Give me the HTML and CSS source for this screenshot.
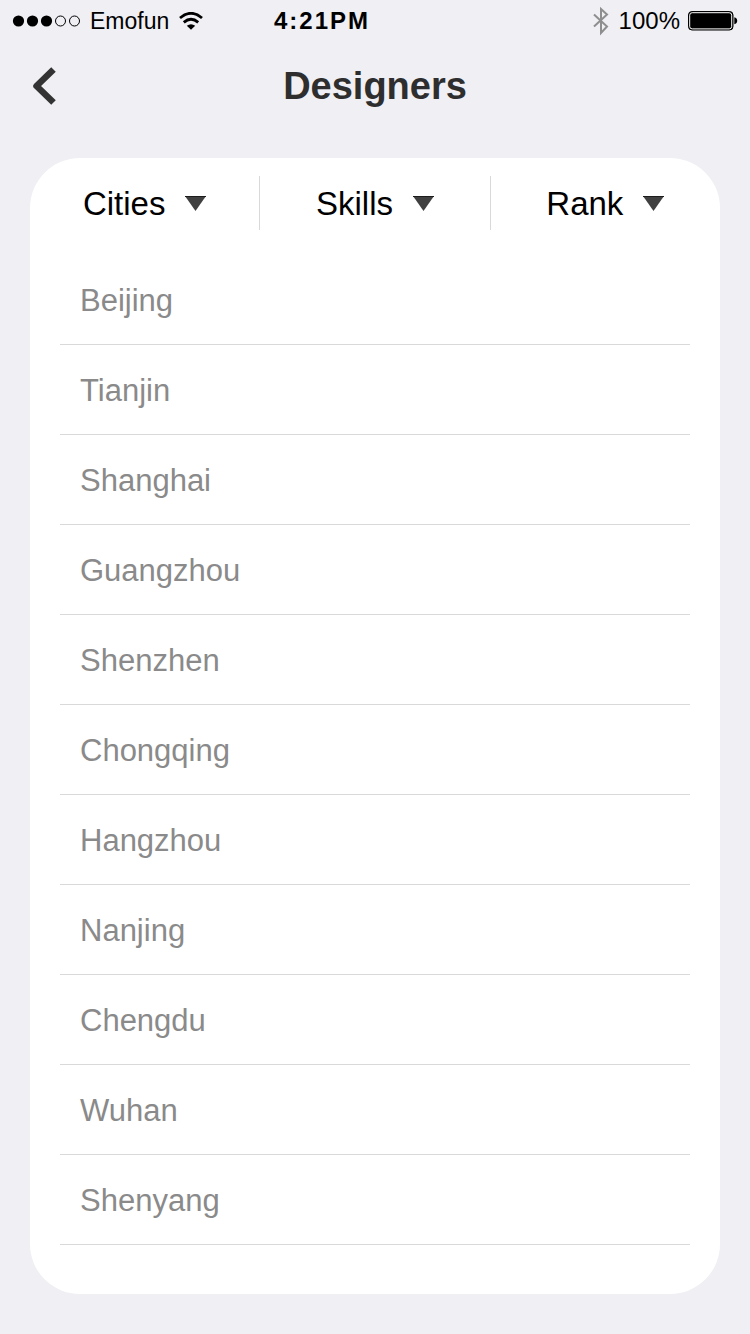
FILE: index.html
```html
<!DOCTYPE html>
<html lang="en">
<head>
    <meta charset="UTF-8">
    <meta name="viewport" content="width=device-width, initial-scale=1">
    <title>Designers</title>
    <link rel="stylesheet" href="styles.css">
</head>
<body>
    <!-- status bar -->
    <div class="status">
        <div class="status-left">
            <svg class="signal" width="68" height="12" viewBox="0 0 68 12" aria-hidden="true">
                <circle cx="6.5" cy="6" r="5.6"/>
                <circle cx="20.5" cy="6" r="5.6"/>
                <circle cx="34.5" cy="6" r="5.6"/>
                <circle class="empty" cx="48.5" cy="6" r="5"/>
                <circle class="empty" cx="62.5" cy="6" r="5"/>
            </svg>
            <span class="carrier">Emofun</span>
            <svg class="wifi" width="24" height="18" viewBox="0 0 24 18" aria-hidden="true">
                <path d="M1 6 Q12 -3.4 23 6"/>
                <path d="M4.8 10.4 Q12 4.2 19.2 10.4"/>
                <path class="dot" d="M7.8 13.8 Q12 10.6 16.2 13.8 L12 17.8 Z"/>
            </svg>
        </div>
        <span class="time">4:21PM</span>
        <div class="status-right">
            <svg class="bluetooth" width="16" height="30" viewBox="0 0 16 30" aria-hidden="true">
                <path d="M1 8.5 L14 20.5 L8 27 V3 L14 8.5 L1 20.5"/>
            </svg>
            <span class="percent">100%</span>
            <svg class="battery" width="50" height="20" viewBox="0 0 50 20" aria-hidden="true">
                <rect class="case" x="0.5" y="0.5" width="44.5" height="18.5" rx="3.5"/>
                <rect class="charge" x="1.7" y="1.7" width="42" height="16.2" rx="2.5"/>
                <path d="M46.3 6.2 Q49.2 7 49.2 9.7 Q49.2 12.4 46.3 13.2 Z"/>
            </svg>
        </div>
    </div>

    <!-- title bar -->
    <header class="header">
        <a class="back" href="#" aria-label="Back">
            <svg width="26" height="40" viewBox="0 0 26 40" aria-hidden="true">
                <path d="M21.5 3.5 L4.5 20 L21.5 36.5"/>
            </svg>
        </a>
        <h1>Designers</h1>
    </header>

    <main class="card">
        <!-- filters, Cities is open -->
        <div class="filters">
            <button type="button" aria-expanded="true" aria-controls="cities">
                <span>Cities</span>
                <svg width="21" height="15" viewBox="0 0 21 15" aria-hidden="true"><path d="M0 0 H21 L10.5 15 Z"/><path class="edge" d="M0 0.5 H21"/></svg>
            </button>
            <button type="button" aria-expanded="false">
                <span>Skills</span>
                <svg width="21" height="15" viewBox="0 0 21 15" aria-hidden="true"><path d="M0 0 H21 L10.5 15 Z"/><path class="edge" d="M0 0.5 H21"/></svg>
            </button>
            <button type="button" aria-expanded="false">
                <span>Rank</span>
                <svg width="21" height="15" viewBox="0 0 21 15" aria-hidden="true"><path d="M0 0 H21 L10.5 15 Z"/><path class="edge" d="M0 0.5 H21"/></svg>
            </button>
        </div>

        <ul class="cities" id="cities">
            <li><a href="#">Beijing</a></li>
            <li><a href="#">Tianjin</a></li>
            <li><a href="#">Shanghai</a></li>
            <li><a href="#">Guangzhou</a></li>
            <li><a href="#">Shenzhen</a></li>
            <li><a href="#">Chongqing</a></li>
            <li><a href="#">Hangzhou</a></li>
            <li><a href="#">Nanjing</a></li>
            <li><a href="#">Chengdu</a></li>
            <li><a href="#">Wuhan</a></li>
            <li><a href="#">Shenyang</a></li>
        </ul>
    </main>
</body>
</html>
```

FILE: styles.css
```css
* { box-sizing: border-box; }

body {
    margin: 0;
    background-color: #efeff4;
    color: #000;
    font-family: "Liberation Sans", Arial, sans-serif;
}

svg { display: block; flex: none; }

/* status bar */
.status {
    display: grid;
    grid-template-columns: 1fr auto 1fr;
    align-items: center;
    height: 41px;
    padding: 0 12px;
    font-size: 24px;
    line-height: 40px;
}
.status-left, .status-right { display: flex; align-items: center; }
.status-left { gap: 10px; }
.status-right { justify-content: flex-end; gap: 8px; }
.carrier { font-size: 23px; }
.time { padding-right: 106px; font-weight: bold; letter-spacing: 2px; }

.signal .empty { fill: none; stroke: #000; stroke-width: 1; }
.wifi path { fill: none; stroke: #000; stroke-width: 2.8; }
.wifi .dot { fill: #000; stroke: none; }
.bluetooth { margin-right: 2px; }
.bluetooth path { fill: none; stroke: #8e8e8e; stroke-width: 2; }
.battery .case { fill: #000; stroke: #000; stroke-width: 1; }
.battery .charge { fill: #000; stroke: #fff; stroke-width: 1; }

/* title bar */
.header {
    display: grid;
    grid-template-columns: 1fr auto 1fr;
    align-items: center;
    height: 89px;
    padding: 0 32px;
}
.header h1 { margin: 0; color: #2e2e2e; font-size: 38px; line-height: 44px; }
.back { justify-self: start; }
.back path { fill: none; stroke: #333; stroke-width: 6.5; stroke-linejoin: round; }

/* white card */
.card {
    margin: 28px 30px 40px;
    padding: 18px 0 49px;
    border-radius: 50px;
    background-color: #fff;
}

.filters { display: flex; }
.filters button {
    display: flex;
    flex: 1;
    align-items: center;
    justify-content: center;
    gap: 20px;
    height: 54px;
    padding: 0;
    border: 0;
    border-right: 1px solid #d9d9d9;
    background: none;
    color: #000;
    font-family: inherit;
    font-size: 33px;
}
.filters button:last-child { border-right: 0; }
.filters span { padding-top: 2px; }
.filters path { fill: #404040; }
.filters .edge { stroke: #1c1c1c; stroke-width: 1; }

.cities { list-style: none; margin: 25px 30px 0; padding: 0; }
.cities li { border-bottom: 1px solid #d9d9d9; }
.cities a {
    display: block;
    padding: 3px 20px 0;
    color: #8a8a8a;
    font-size: 31px;
    line-height: 86px;
    text-decoration: none;
}
```
